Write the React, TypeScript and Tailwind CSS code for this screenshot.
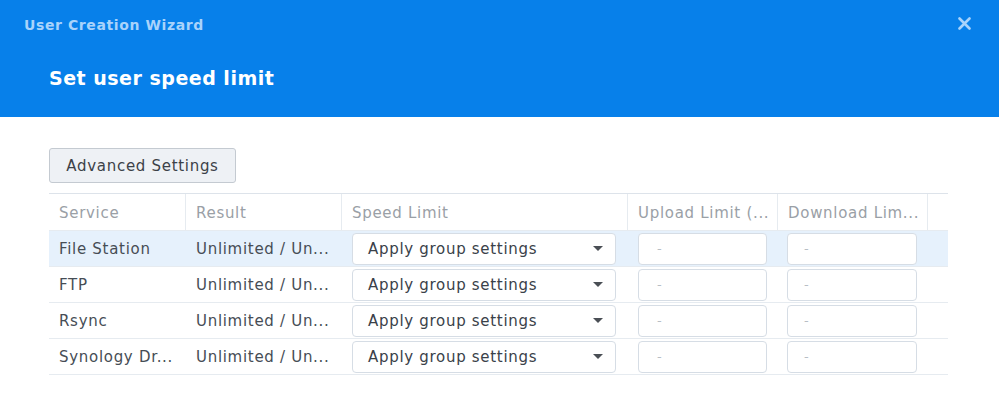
import React from "react";

const rows = ["File Station", "FTP", "Rsync", "Synology Dr..."];

function Caret() {
  return (
    <svg width="12" height="7" viewBox="0 0 12 7">
      <path d="M1 1 L11 1 L6 6 Z" fill="#4a4f55" />
    </svg>
  );
}

export default function App() {
  return (
    <div className="w-[999px] h-[395px] bg-white overflow-hidden" style={{ fontFamily: '"DejaVu Sans", Verdana, sans-serif' }}>
      <div className="h-[117px] bg-[#0780ea] relative">
        <div className="pt-[16px] pl-[24px] text-[14px] font-bold text-[#a9d3fb] leading-[18px] tracking-[0.6px]">User Creation Wizard</div>
        <div className="pt-[32px] pl-[49px] text-[19px] font-bold text-white leading-[24px] tracking-[0.5px]">Set user speed limit</div>
        <svg className="absolute left-[958px] top-[17px]" width="13" height="13" viewBox="0 0 13 13">
          <path d="M1.5 1.5 L11.5 11.5 M11.5 1.5 L1.5 11.5" stroke="#a9d3fb" strokeWidth="2.6" strokeLinecap="round" />
        </svg>
      </div>
      <div className="pl-[49px] pr-[51px] pt-[31px] tracking-[0.7px]">
        <div className="h-[35px] w-[187px] flex items-center justify-center pt-[2px] rounded-[3px] border border-[#c4cad1] bg-[#eef1f5] text-[15px] text-[#3c4148]">
          Advanced Settings
        </div>
        <div className="mt-[10px] border-t border-[#dde3ea] text-[15px]">
          <div className="flex h-[37px] items-center text-[#9aa0a6] border-b border-[#e6ebf0]">
            <div className="w-[137px] h-full flex items-center pt-[2px] pl-[10px] border-r border-[#e6ebf0]">Service</div>
            <div className="w-[156px] h-full flex items-center pt-[2px] pl-[10px] border-r border-[#e6ebf0]">Result</div>
            <div className="w-[286px] h-full flex items-center pt-[2px] pl-[10px] border-r border-[#e6ebf0]">Speed Limit</div>
            <div className="w-[150px] h-full flex items-center pt-[2px] pl-[10px] border-r border-[#e6ebf0] whitespace-nowrap overflow-hidden">Upload Limit (...</div>
            <div className="w-[150px] h-full flex items-center pt-[2px] pl-[10px] border-r border-[#e6ebf0] whitespace-nowrap overflow-hidden">Download Lim...</div>
            <div className="flex-1" />
          </div>
          {rows.map((r, i) => (
            <div key={r} className={`flex h-[36px] items-center text-[#464d55] border-b border-[#e6ebf0] ${i === 0 ? "bg-[#e6f1fc]" : ""}`}>
              <div className="w-[137px] pl-[10px] pt-[2px] whitespace-nowrap overflow-hidden">{r}</div>
              <div className="w-[156px] pl-[10px] pt-[2px] whitespace-nowrap overflow-hidden">Unlimited / Un...</div>
              <div className="w-[286px] pl-[10px] pr-[12px]">
                <div className="h-[32px] bg-white border border-[#d6dde5] rounded-[4px] flex items-center justify-between pl-[15px] pr-[11px] text-[#3a4149]">
                  <span className="whitespace-nowrap pt-[2px]">Apply group settings</span>
                  <Caret />
                </div>
              </div>
              <div className="w-[150px] pl-[10px] pr-[11px]">
                <div className="h-[32px] bg-white border border-[#d6dde5] rounded-[4px] flex items-center pl-[18px] text-[#b8bec5] text-[13px]">-</div>
              </div>
              <div className="w-[150px] pl-[9px] pr-[11px]">
                <div className="h-[32px] bg-white border border-[#d6dde5] rounded-[4px] flex items-center pl-[16px] text-[#b8bec5] text-[13px]">-</div>
              </div>
              <div className="flex-1" />
            </div>
          ))}
        </div>
      </div>
    </div>
  );
}
